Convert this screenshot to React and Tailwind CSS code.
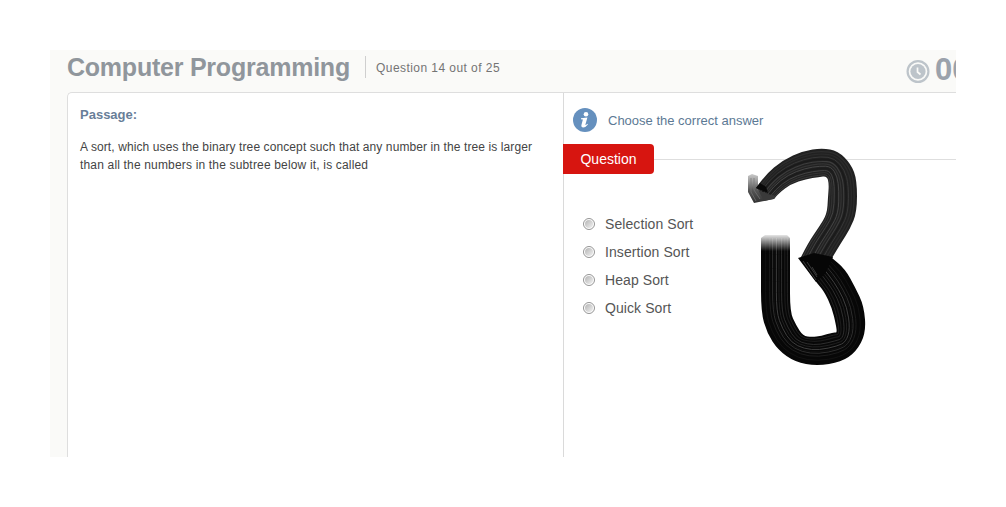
import React from "react";

const options = ["Selection Sort", "Insertion Sort", "Heap Sort", "Quick Sort"];

// Paired rails of each brush stroke: [outer point, inner point]
const upperRails = [
  [[756, 188], [774, 199]],
  [[765, 175], [779, 193]],
  [[783, 160], [791, 184]],
  [[803, 151], [806, 179]],
  [[822, 148], [819, 177]],
  [[838, 151], [827, 176]],
  [[851, 164], [829, 184]],
  [[857, 180], [828, 197]],
  [[857, 212], [827, 214]],
  [[850, 229], [819, 227]],
  [[841, 243], [808, 243]],
  [[832, 258], [800, 259]],
];

const lowerRails = [
  [[761, 238], [790, 238]],
  [[761, 270], [790, 275]],
  [[761, 312], [790, 312]],
  [[767, 333], [796, 325]],
  [[778, 350], [803, 336]],
  [[795, 362], [812, 337]],
  [[817, 366], [821, 336]],
  [[841, 362], [834, 332]],
  [[856, 352], [837, 333]],
  [[866, 333], [836, 325]],
  [[864, 306], [832, 308]],
  [[855, 287], [824, 291]],
  [[845, 269], [815, 281]],
  [[832, 258], [800, 259]],
];

function smooth(points) {
  let d = `M${points[0][0]} ${points[0][1]}`;
  for (let i = 1; i < points.length - 1; i++) {
    const [x, y] = points[i];
    const [nx, ny] = points[i + 1];
    d += ` Q${x} ${y} ${(x + nx) / 2} ${(y + ny) / 2}`;
  }
  const last = points[points.length - 1];
  return `${d} L${last[0]} ${last[1]}`;
}

function outline(rails) {
  const outer = rails.map((r) => r[0]);
  const inner = rails.map((r) => r[1]).reverse();
  return `${smooth(outer)} ${smooth(inner).replace("M", "L")} Z`;
}

function between(rails, t) {
  return smooth(rails.map(([o, n]) => [o[0] + (n[0] - o[0]) * t, o[1] + (n[1] - o[1]) * t]));
}

const upperBristles = [
  [0.1, "#2e2e2e", 1.2], [0.19, "#2a2a2a", 1.4], [0.29, "#373737", 1], [0.37, "#1a1a1a", 1.4],
  [0.45, "#3d3d3d", 1.1], [0.54, "#333333", 1.2], [0.62, "#4a4a4a", 0.9], [0.7, "#1c1c1c", 1.5],
  [0.78, "#434343", 1], [0.86, "#343434", 1], [0.94, "#3a3a3a", 1],
];
const lowerBristles = [
  [0.16, "#121212", 1], [0.3, "#1c1c1c", 1], [0.4, "#2e2e2e", 1], [0.45, "#101010", 1],
  [0.53, "#454545", 0.9], [0.62, "#202020", 1], [0.71, "#373737", 0.8], [0.82, "#1a1a1a", 1.2],
  [0.91, "#282828", 0.8],
];

function Bristles({ rails, lines }) {
  return lines.map(([t, color, width]) => (
    <path key={t} d={between(rails, t)} fill="none" stroke={color} strokeWidth={width} />
  ));
}

function BrushMark() {
  return (
    <svg className="pointer-events-none absolute top-[90px] left-[690px]" width="130" height="230" viewBox="740 140 130 230" aria-hidden="true">
      <defs>
        <linearGradient id="stroke-start" gradientUnits="userSpaceOnUse" x1="0" y1="235" x2="0" y2="251">
          <stop offset="0" stopColor="#fff" stopOpacity="0.1" />
          <stop offset="1" stopColor="#fff" />
        </linearGradient>
        <linearGradient id="tip" x1="0" y1="0" x2="0" y2="1">
          <stop offset="0" stopColor="#666" stopOpacity="0.35" />
          <stop offset="0.55" stopColor="#444" stopOpacity="0.9" />
          <stop offset="1" stopColor="#303030" />
        </linearGradient>
        <mask id="fade" maskUnits="userSpaceOnUse" x="740" y="140" width="130" height="230">
          <rect x="740" y="140" width="130" height="230" fill="url(#stroke-start)" />
        </mask>
      </defs>
      <path d="M748 176L752 174L758 176V187L768 193L776 195L773 199L764 201L754 203L748 192Z" fill="url(#tip)" />
      <path d="M751 178V192L756 201M754 178V190L760 199M757 189L765 198" fill="none" stroke="#777" strokeWidth="0.7" />
      <path d={outline(upperRails)} fill="#212121" />
      <Bristles rails={upperRails} lines={upperBristles} />
      <path d="M756 188L768 193L766 187L760 183Z" fill="#080808" />
      <path d="M758 190L768 194L776 196L774 199L764 201Z" fill="#3a3a3a" />
      <g mask="url(#fade)">
        <path d={outline(lowerRails)} fill="#070707" />
        <path d="M761 245V238L765 235H787L790 238V245Z" fill="#070707" />
        <Bristles rails={lowerRails} lines={lowerBristles} />
      </g>
      <path d="M798 258L814 253L833 257L825 274L816 282Z" fill="#060606" />
      <path d="M803 261L816 280M807 262L817 277M812 267L817 275" fill="none" stroke="#414141" strokeWidth="0.9" />
    </svg>
  );
}

function ClockIcon() {
  return (
    <svg className="mt-[9px] shrink-0" width="24" height="24" viewBox="0 0 24 24" aria-hidden="true">
      <circle cx="12" cy="12.5" r="10.4" fill="none" stroke="#bdc4ca" strokeWidth="2.2" />
      <circle cx="12" cy="12.5" r="7.6" fill="#bdc4ca" />
      <path d="M11.5 8.5V13L14.5 15.5" fill="none" stroke="#fafaf8" strokeWidth="1.7" />
    </svg>
  );
}

function InfoIcon() {
  return (
    <svg className="shrink-0" width="24" height="24" viewBox="0 0 24 24" aria-hidden="true">
      <circle cx="12" cy="12" r="12" fill="#6590be" />
      <circle cx="13" cy="6.3" r="2.3" fill="#fff" />
      <path d="M8 10.2L14.4 9.4L12.5 16.3Q12.2 17.3 13 16.9L14.3 15.8L14.9 16.5Q12.7 19.4 10.3 19.4Q7.8 19.2 8.5 16.7L9.9 11.6L8 11.2Z" fill="#fff" />
    </svg>
  );
}

function Header() {
  return (
    <header className="flex h-[42px] shrink-0 pl-[17px]">
      <h1 className="w-[298px] shrink-0 text-[25px] leading-[34px] font-bold tracking-[-0.23px] whitespace-nowrap text-[#90969c]">
        Computer Programming
      </h1>
      <div className="mt-1.5 h-[22px] w-px shrink-0 bg-[#cfcfcf]" />
      <p className="ml-2.5 grow pt-[9px] text-[12px] leading-[18px] tracking-[0.44px] whitespace-nowrap text-[#747474]">
        Question 14 out of 25
      </p>
      <div className="flex w-[101px] shrink-0 overflow-hidden pl-[50.5px]">
        <ClockIcon />
        <span className="ml-[5.5px] text-[31px] leading-[39px] font-bold text-[#9ba2ac]">00</span>
      </div>
    </header>
  );
}

export default function App() {
  return (
    <div className="h-[507px] w-[1006px] overflow-hidden bg-white p-[50px] font-['Liberation_Sans',Arial,sans-serif]">
      <div className="relative flex h-[407px] w-[906px] flex-col overflow-hidden bg-[#fafaf8]">
        <Header />
        <main className="ml-[17px] flex grow rounded-tl-[5px] border-t border-l border-[#dedede] bg-white">
          <section className="w-[495px] shrink-0 pt-3 pl-3">
            <h2 className="text-[13px] leading-[20px] font-bold text-[#687e98]">Passage:</h2>
            <p className="mt-[13px] text-[12px] leading-[18px] whitespace-nowrap text-[#444]">
              <span className="tracking-[0.1px]">A sort, which uses the binary tree concept such that any number in the tree is larger</span>
              <br />
              <span className="tracking-[0.17px]">than all the numbers in the subtree below it, is called</span>
            </p>
          </section>
          <section className="grow border-l border-[#dadada]">
            <div className="flex h-[51px] items-center gap-[11px] pt-[3px] pl-[9px]">
              <InfoIcon />
              <p className="pt-px text-[13px] leading-[20px] whitespace-nowrap text-[#5c7994]">Choose the correct answer</p>
            </div>
            <div className="flex h-[30px] items-center">
              <h3 className="-ml-px flex h-[30px] w-[91px] items-center justify-center rounded-r-[4px] bg-[#d71510] text-[14px] text-white">Question</h3>
              <div className="h-px grow bg-[#dedede]" />
            </div>
            <ul className="mt-9 pl-[19px]">
              {options.map((option) => (
                <li key={option} className="flex h-7 items-center gap-[10px] text-[14px] tracking-[0.08px] whitespace-nowrap text-[#555]">
                  <span className="flex size-3 rounded-full border border-[#949494] p-px">
                    <span className="grow rounded-full bg-linear-to-br from-[#b4b4b4] to-[#f2f2f2]" />
                  </span>
                  {option}
                </li>
              ))}
            </ul>
          </section>
        </main>
        <BrushMark />
      </div>
    </div>
  );
}
